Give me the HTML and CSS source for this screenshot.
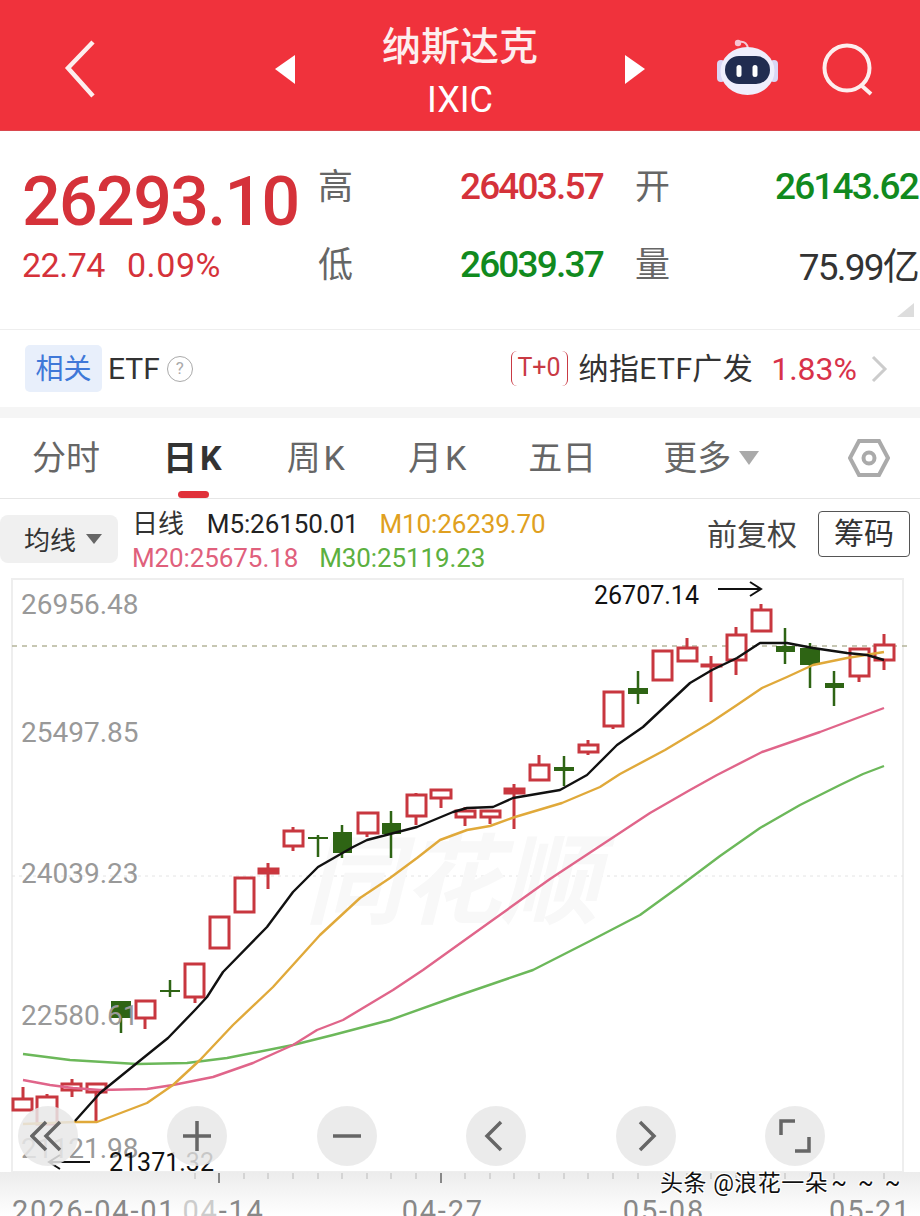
FILE: index.html
```html
<!DOCTYPE html>
<html lang="zh">
<head>
<meta charset="utf-8">
<title>纳斯达克 IXIC</title>
<link rel="stylesheet" href="styles.css">
</head>
<body>
<div class="page">
  <header class="top">
    <svg class="ico-back" width="40" height="62" viewBox="0 0 40 62"><path d="M31 4 L6 30 L31 58" /></svg>
    <svg class="tri-l" width="24" height="32" viewBox="0 0 24 32"><polygon points="22,1 2,15 22,30" /></svg>
    <div class="title">
      <div class="title-cn">纳斯达克</div>
      <div class="title-en">IXIC</div>
    </div>
    <svg class="tri-r" width="24" height="32" viewBox="0 0 24 32"><polygon points="2,1 22,15 2,30" /></svg>
    <svg class="robot" width="66" height="62" viewBox="0 0 66 62">
      <path d="M25 4 C 30 3, 33 6, 34 10" fill="none" stroke="#f4c9d6" stroke-width="2"/>
      <circle cx="24" cy="5" r="3.2" fill="#f7c3d3"/>
      <rect x="3" y="22" width="8" height="22" rx="4" fill="#d9d6f4"/>
      <rect x="56" y="22" width="8" height="22" rx="4" fill="#d9d6f4"/>
      <ellipse cx="33.500" cy="33" rx="27" ry="24" fill="#efeefc"/>
      <rect x="11" y="18" width="45" height="28" rx="14" fill="#212c50"/>
      <rect x="22.500" y="27" width="5" height="12" rx="2.500" fill="#fff"/>
      <rect x="38.500" y="27" width="5" height="12" rx="2.500" fill="#fff"/>
    </svg>
    <svg class="search" width="56" height="56" viewBox="0 0 56 56"><circle cx="26" cy="26" r="22.5"/><path d="M41 44 L50 52"/></svg>
  </header>

  <section class="quote">
    <div class="last">
      <div class="price">26293.10</div>
      <div class="change"><span>22.74</span><span class="chg-pct">0.09%</span></div>
    </div>
    <div class="stats">
      <div class="stat"><span class="lab">高</span><span class="val red">26403.57</span></div>
      <div class="stat"><span class="lab">开</span><span class="val green">26143.62</span></div>
      <div class="stat"><span class="lab">低</span><span class="val green">26039.37</span></div>
      <div class="stat"><span class="lab">量</span><span class="val dark">75.99亿</span></div>
    </div>
    <svg class="corner" width="18" height="14" viewBox="0 0 18 14"><polygon points="17,0 17,14 0,14"/></svg>
  </section>

  <section class="etf">
    <div class="etf-left">
      <span class="badge">相关</span>
      <span class="etf-word">ETF</span>
      <span class="help">?</span>
    </div>
    <div class="etf-right">
      <span class="t0">T+0</span>
      <span class="etf-name">纳指ETF广发</span>
      <span class="etf-pct">1.83%</span>
      <svg class="etf-arrow" width="18" height="28" viewBox="0 0 18 28"><path d="M3 2 L15 14 L3 26"/></svg>
    </div>
  </section>

  <nav class="tabs">
    <span class="tab t-fs">分时</span>
    <span class="tab on t-rk">日K</span>
    <span class="tab t-zk">周K</span>
    <span class="tab t-yk">月K</span>
    <span class="tab t-wr">五日</span>
    <span class="tab t-more">更多<i class="caret"></i></span>
    <svg class="hex" width="42" height="40" viewBox="0 0 42 40"><path d="M11 3 H31 L40 20 L31 37 H11 L2 20 Z"/><circle cx="21" cy="20" r="5.500"/></svg>
  </nav>

  <section class="legend">
    <div class="ma-btn">均线<i class="caret small"></i></div>
    <div class="ma-vals">
      <div class="ma-row"><span class="kind">日线</span><span class="m5">M5:26150.01</span><span class="m10">M10:26239.70</span></div>
      <div class="ma-row"><span class="m20">M20:25675.18</span><span class="m30">M30:25119.23</span></div>
    </div>
    <span class="adj">前复权</span>
    <span class="chip">筹码</span>
  </section>

  <section class="chart">
    <svg class="plot" width="920" height="594" viewBox="0 578 920 594">
      <rect class="frame" x="12" y="579" width="891" height="593"/>
      <line class="grid-main" x1="12" y1="646" x2="908" y2="646"/>
      <line class="grid" x1="12" y1="876" x2="903" y2="876"/>
      <text class="wm" x="305" y="916">同花顺</text>

      <g class="cd up">
        <path d="M23 1087V1111M47 1094V1124M72 1079V1097M96 1092V1122M145 1018V1029M195 997V1003M268 863V889M293 827V851M367 833V837M416 793V825M441 798V808M465 807V826M490 817V824M514 784V829M539 755V765M588 740V755M613 726V729M687 638V648M711 656V702M736 627V675M761 604V610M859 676V682M884 634V670"/>
        <rect x="13" y="1099" width="19" height="11"/><rect x="37" y="1097" width="20" height="27"/><rect x="62" y="1084" width="19" height="6"/><rect x="87" y="1084" width="19" height="8"/>
        <rect x="136" y="1001" width="19" height="17"/><rect x="185" y="964" width="19" height="33"/><rect x="210" y="917" width="19" height="31"/><rect x="235" y="878" width="19" height="34"/>
        <rect x="259" y="869" width="19" height="4" class="thin"/><rect x="284" y="831" width="19" height="15"/><rect x="358" y="813" width="20" height="20"/><rect x="407" y="795" width="19" height="21"/>
        <rect x="431" y="790" width="20" height="8"/><rect x="456" y="811" width="19" height="6"/><rect x="481" y="811" width="19" height="6"/><rect x="505" y="789" width="19" height="4" class="thin"/>
        <rect x="530" y="765" width="19" height="15"/><rect x="579" y="745" width="19" height="7"/><rect x="604" y="692" width="19" height="34"/><rect x="653" y="651" width="19" height="29"/>
        <rect x="678" y="648" width="19" height="13"/><rect x="702" y="665" width="19" height="1" class="thin"/><rect x="727" y="635" width="19" height="25"/><rect x="752" y="610" width="19" height="21"/>
        <rect x="850" y="649" width="19" height="27"/><rect x="875" y="645" width="19" height="15"/>
      </g>

      <g class="cd down">
        <path d="M121 1018V1033M170 980V997M318 835V857M342 825V858M391 811V858M564 756V786M638 671V704M785 628V664M810 643V688M834 671V706"/>
        <rect x="111" y="1001" width="20" height="17"/><rect x="160" y="990" width="20" height="2"/><rect x="308" y="837" width="20" height="2"/><rect x="333" y="832" width="19" height="21"/>
        <rect x="382" y="823" width="19" height="11"/><rect x="554" y="767" width="20" height="4"/><rect x="628" y="688" width="20" height="6"/><rect x="776" y="646" width="19" height="6"/>
        <rect x="800" y="648" width="20" height="17"/><rect x="825" y="683" width="19" height="5"/>
      </g>

      <polyline class="ma l30" points="23,1054 70,1060 137,1064 187,1063 227,1058 293,1045 333,1035 390,1020 460,995 533,970 590,941 640,915 680,886 720,856 760,828 800,805 840,785 863,774 884,766"/>
      <polyline class="ma l20" points="23,1080 50,1085 73,1088 100,1090 147,1089 173,1085 213,1077 253,1063 293,1045 317,1030 343,1020 393,990 423,970 490,922 550,879 600,846 650,813 690,790 717,775 762,752 820,732 884,708"/>
      <polyline class="ma l10" points="23,1124 75,1122 97,1122 147,1103 173,1085 200,1060 233,1025 273,987 320,935 360,898 390,878 417,858 440,840 467,830 490,826 515,817 562,803 600,787 620,774 665,750 710,723 737,705 762,688 787,677 813,665 847,658 884,652"/>
      <polyline class="ma l5" points="75,1121 100,1093 137,1063 168,1038 195,1010 207,997 223,972 267,927 293,892 318,867 353,847 367,840 417,827 453,812 467,808 493,807 513,798 560,790 587,775 617,745 643,727 690,683 712,670 737,658 760,643 787,643 813,648 847,653 867,655 884,660"/>

      <text class="axis" x="21" y="614">26956.48</text>
      <text class="axis" x="21" y="742">25497.85</text>
      <text class="axis" x="21" y="883">24039.23</text>
      <text class="axis" x="21" y="1025">22580.61</text>
      <text class="axis" x="21" y="1158">21121.98</text>

      <text class="note" x="594" y="604">26707.14</text>
      <path class="arrow" d="M718 589H760M750 582L761 589L750 596"/>
      <text class="note" x="109" y="1171">21371.32</text>
      <path class="arrow" d="M90 1162H50M60 1155L49 1162L60 1169"/>
    </svg>

    <div class="ctrls">
      <span class="ctrl"><svg width="36" height="36" viewBox="0 0 36 36"><path d="M16 4L2 18L16 32M30 4L16 18L30 32"/></svg></span>
      <span class="ctrl"><svg width="36" height="36" viewBox="0 0 36 36"><path d="M18 3V33M4 18H32"/></svg></span>
      <span class="ctrl"><svg width="36" height="36" viewBox="0 0 36 36"><path d="M4 18H32"/></svg></span>
      <span class="ctrl"><svg width="36" height="36" viewBox="0 0 36 36"><path d="M23 4L9 18L23 32"/></svg></span>
      <span class="ctrl"><svg width="36" height="36" viewBox="0 0 36 36"><path d="M12 4L26 18L12 32"/></svg></span>
      <span class="ctrl"><svg width="36" height="36" viewBox="0 0 36 36"><path d="M4 17V3H18M32 19V33H18"/></svg></span>
    </div>
  </section>

  <section class="dates">
    <svg class="ticks" width="920" height="12" viewBox="0 0 920 12">
      <path class="minor" d="M195 1V7M244 1V7M268 1V7M293 1V7M318 1V7M342 1V7M367 1V7M391 1V7M416 1V7M465 1V7M490 1V7M514 1V7M539 1V7M564 1V7M588 1V7M613 1V7M638 1V7M687 1V7M711 1V7M736 1V7M761 1V7M785 1V7M810 1V7M834 1V7M884 1V7"/>
      <path class="major" d="M219 1V11M441 1V11"/>
    </svg>
    <div class="date-row">
      <span class="d1">2026-04-01</span>
      <span class="d2"><span class="faint">04</span>-14</span>
      <span class="d3">04-27</span>
      <span class="d4">05-08</span>
      <span class="d5">05-21</span>
    </div>
    <div class="mark">头条 @浪花一朵<span class="tilde">~~~</span></div>
  </section>
</div>
</body>
</html>
```

FILE: styles.css
```css
* { box-sizing: border-box; }
html, body { margin: 0; padding: 0; background: #fff; }
body { overflow: hidden; font-family: Roboto, "Noto Sans CJK SC", sans-serif; color: #333; }
.page { width: 920px; height: 1216px; overflow: hidden; }

/* header */
.top { height: 131px; background: #f0323c; display: flex; align-items: flex-start; color: #fff; border-bottom: 1px solid #d9474e; }
.top svg { flex: none; }
.ico-back { margin: 38px 0 0 62px; fill: none; stroke: #fdeeee; stroke-width: 4.5; }
.tri-l { margin: 54px 0 0 171px; fill: #fff; }
.tri-r { margin: 54px 0 0 0; fill: #fff; }
.title { width: 326px; text-align: center; flex: none; }
.title-cn { font-size: 39px; line-height: 46px; margin-top: 24px; font-weight: 500; color: #fdeeee; }
.title-en { font-size: 36px; line-height: 42px; margin-top: 9px; }
.robot { margin: 38px 0 0 67px; }
.search { margin: 42px 0 0 41px; fill: none; stroke: #fdeeee; stroke-width: 4; }

/* quote */
.quote { position: relative; height: 199px; padding: 16px 0 0 22px; display: flex; border-bottom: 1px solid #eee; }
.last { width: 296px; flex: none; padding-top: 15px; }
.price { font-size: 68px; line-height: 80px; font-weight: 500; letter-spacing: -1.6px; color: #d5323a; white-space: nowrap; }
.change { font-size: 34px; line-height: 46px; color: #d5323a; display: flex; gap: 22px; letter-spacing: -.5px; }
.chg-pct { letter-spacing: .6px; }
.stats { display: grid; grid-template-columns: 285px 283px; column-gap: 32px; grid-auto-rows: 78px; }
.stat { display: flex; justify-content: space-between; align-items: center; }
.lab { font-size: 35px; color: #666; margin-bottom: 6px; }
.val { font-size: 37px; font-weight: 500; letter-spacing: -1.8px; white-space: nowrap; }
.red { color: #d5323a; }
.green { color: #118a1e; }
.dark { color: #333; font-weight: 400; }
.corner { position: absolute; right: 5px; top: 172px; fill: #ddd; }

/* etf */
.etf { height: 77px; display: flex; justify-content: space-between; align-items: center; padding: 0 32px 0 25px; }
.etf-left, .etf-right { display: flex; align-items: center; }
.badge { width: 77px; height: 47px; line-height: 49px; text-align: center; background: #e8effb; color: #3f78d8; font-size: 28px; border-radius: 5px; }
.etf-word { font-size: 30px; margin-left: 6px; color: #333; }
.help { width: 26px; height: 26px; margin-left: 7px; border: 1.5px solid #aaa; border-radius: 50%; color: #aaa; font-size: 17px; line-height: 23px; text-align: center; }
.t0 { width: 57px; height: 35px; line-height: 33px; text-align: center; font-size: 25px; color: #c93a44; border-left: 1px solid #c93a44; border-right: 1px solid #c93a44; border-radius: 6px; }
.etf-name { font-size: 30px; margin: 0 0 5px 11px; color: #333; letter-spacing: .4px; }
.etf-pct { font-size: 32px; margin-left: 18px; color: #d8324a; }
.etf-arrow { margin-left: 13px; fill: none; stroke: #ccc; stroke-width: 3; }

/* tabs */
.tabs { position: relative; height: 92px; border-top: 11px solid #f5f5f5; border-bottom: 1px solid #e6e6e6; display: flex; align-items: center; font-size: 34px; color: #666; }
.tab { flex: none; line-height: 60px; white-space: nowrap; }
.t-fs { margin-left: 32px; }
.t-rk { margin-left: 63px; letter-spacing: 3px; }
.t-zk { margin-left: 62px; letter-spacing: 3px; }
.t-yk { margin-left: 60px; letter-spacing: 3px; }
.t-wr { margin-left: 59px; }
.t-more { margin-left: 67px; display: flex; align-items: center; }
.on { position: relative; font-weight: 700; color: #333; }
.on::after { content: ""; position: absolute; left: 15px; bottom: -10px; width: 31px; height: 7px; border-radius: 4px; background: #e0313a; }
.caret { display: block; width: 0; height: 0; margin-left: 8px; border-left: 10px solid transparent; border-right: 10px solid transparent; border-top: 14px solid #aaa; }
.caret.small { margin-left: 10px; border-left-width: 8px; border-right-width: 8px; border-top: 10px solid #666; }
.hex { margin-left: 89px; fill: none; stroke: #aaa; stroke-width: 4; }

/* legend */
.legend { height: 79px; display: flex; align-items: center; padding-right: 10px; }
.ma-btn { width: 118px; height: 48px; background: #f0f0f0; border-radius: 8px; padding-left: 24px; display: flex; align-items: center; font-size: 26px; color: #333; flex: none; }
.ma-vals { margin-left: 14px; padding-top: 4px; font-size: 26px; flex: none; width: 575px; }
.ma-row { display: flex; gap: 21px; line-height: 34px; letter-spacing: -.1px; white-space: nowrap; }
.kind { color: #333; margin-right: 2px; }
.m5 { color: #222; }
.m10 { color: #e0a020; }
.m20 { color: #e0607c; }
.m30 { color: #5cb040; }
.adj { font-size: 30px; color: #444; margin-left: auto; margin-bottom: 14px; white-space: nowrap; }
.chip { width: 92px; height: 46px; margin: 0 0 9px 21px; border: 1.5px solid #555; border-radius: 4px; text-align: center; line-height: 43px; font-size: 30px; color: #333; flex: none; }

/* chart */
.chart { position: relative; height: 594px; }
.plot { display: block; }
.frame { fill: #fff; stroke: #eee; stroke-width: 2; }
.grid-main { stroke: #b5b59a; stroke-width: 1.5; stroke-dasharray: 5 5; }
.grid { stroke: #e4e4e4; stroke-width: 1; stroke-dasharray: 3 4; }
.wm { font-size: 98px; font-weight: 700; font-style: italic; fill: #f8f8f8; }
.cd path { fill: none; stroke-width: 3; }
.cd rect { stroke-width: 3; }
.up path { stroke: #c8373f; }
.up rect { fill: #fff; stroke: #c8373f; }
.up rect.thin { fill: #d5323a; }
.down path { stroke: #2e6414; stroke-width: 2.5; }
.down rect { fill: #2e6414; stroke: none; }
.ma { fill: none; stroke-width: 2.4; stroke-linejoin: round; }
.l5 { stroke: #111; }
.l10 { stroke: #e0a93a; }
.l20 { stroke: #e0658a; }
.l30 { stroke: #6cb85a; }
.axis { font-size: 28px; fill: #999; }
.note { font-size: 25px; fill: #111; }
.arrow { fill: none; stroke: #111; stroke-width: 2; }
.ctrls { position: absolute; left: 18px; top: 528px; display: flex; gap: 89.4px; }
.ctrl { width: 60px; height: 60px; border-radius: 50%; background: rgba(232, 232, 232, .85); display: flex; align-items: center; justify-content: center; }
.ctrl svg { fill: none; stroke: #666; stroke-width: 3.5; }

/* dates */
.dates { position: relative; height: 44px; background: linear-gradient(#ececec, #fff); }
.ticks { display: block; }
.minor { stroke: #ccc; stroke-width: 1.5; fill: none; }
.major { stroke: #888; stroke-width: 2; fill: none; }
.date-row { display: flex; margin-top: 11px; font-size: 29px; line-height: 32px; color: #888; letter-spacing: 1.8px; white-space: nowrap; }
.d1 { margin-left: 12px; }
.d2 { margin-left: 6px; }
.faint { color: #ccc; }
.d3 { margin-left: 137px; }
.d4 { margin-left: 139px; }
.d5 { margin-left: 124px; }
.mark { position: absolute; left: 660px; top: -3px; font-size: 23px; line-height: 30px; color: #111; letter-spacing: .5px; white-space: nowrap; text-shadow: 1px 1px 0 #fff, -1px -1px 0 #fff, 1px -1px 0 #fff, -1px 1px 0 #fff; }
.tilde { letter-spacing: 11px; margin-left: 3px; }
```
